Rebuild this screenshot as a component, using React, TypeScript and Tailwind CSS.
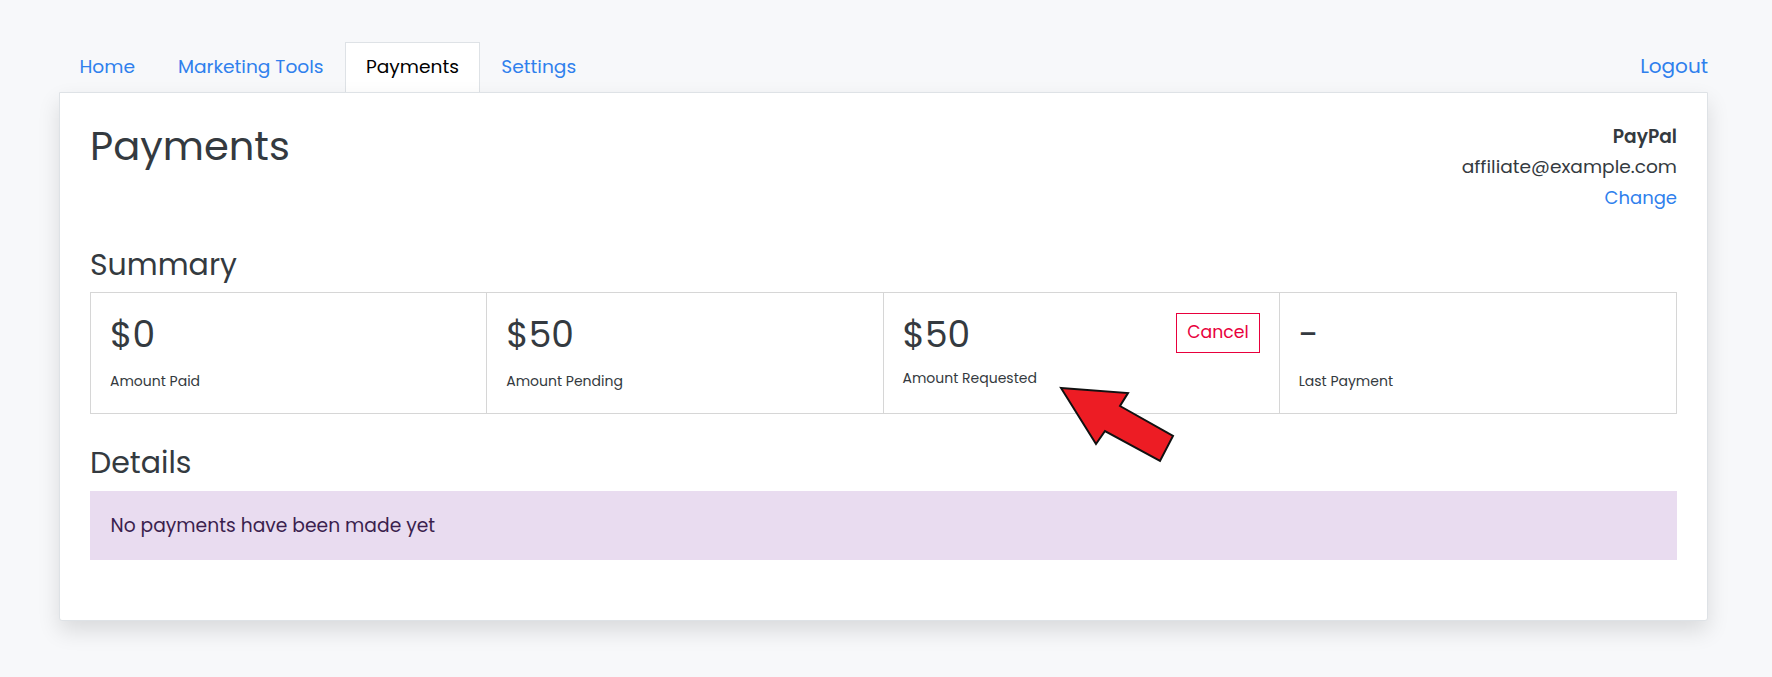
import React from "react";

const tabs = [
  { key: "home", label: "Home" },
  { key: "marketing", label: "Marketing Tools" },
  { key: "payments", label: "Payments" },
  { key: "settings", label: "Settings" },
];

const summary = [
  { value: "$0", label: "Amount Paid" },
  { value: "$50", label: "Amount Pending" },
  { value: "$50", label: "Amount Requested", cancel: true },
  { value: "-", label: "Last Payment" },
];

function Arrow() {
  return (
    <svg width="120" height="82" viewBox="0 0 120 82" className="absolute left-[998px] top-[292px]">
      <polygon
        points="3,3 70,8 62,21 115,51 102,76 47,46 38,59"
        fill="#ed1c24"
        stroke="#111"
        strokeWidth="2"
        strokeLinejoin="miter"
      />
    </svg>
  );
}

export default function App() {
  const active = "payments";

  return (
    <div className="min-h-[677px] bg-[#f7f8fa] font-['Poppins','Open_Sans',sans-serif] text-[#343a40]">
      <div className="ml-[59px] w-[1649px] pt-[42px]">
        <div className="flex items-end justify-between">
          <div className="-ml-[1px] flex">
            {tabs.map((tab) => {
              const isActive = tab.key === active;
              return (
                <div
                  key={tab.key}
                  className={
                    isActive
                      ? "relative -mb-px h-[50px] px-[20px] pt-[10px] text-[18.6px] text-black bg-white border border-b-0 border-[#dee2e6]"
                      : "h-[50px] px-[21.5px] pt-[11px] text-[18.6px] text-[#2f80ed]"
                  }
                >
                  {tab.label}
                </div>
              );
            })}
          </div>
          <div className="pb-[11px] text-[20px] text-[#2f80ed]">Logout</div>
        </div>

        <div className="relative rounded-b-[3px] border border-[#dee2e6] bg-white px-[30px] pt-[29px] pb-[60px] shadow-[0_10px_22px_rgba(0,0,0,0.12)]">
          <div className="flex justify-between">
            <h1 className="text-[40px] leading-[48px] font-normal">Payments</h1>
            <div className="text-right text-[18.6px] leading-[30px]">
              <div className="font-semibold">PayPal</div>
              <div>affiliate@example.com</div>
              <div className="text-[18px] text-[#2f80ed] leading-[32px]">Change</div>
            </div>
          </div>

          <h2 className="mt-[33px] text-[30px] leading-[36px]">Summary</h2>
          <div className="mt-[9px] grid grid-cols-4 border border-[#d6d6d6]">
            {summary.map((item, i) => (
              <div
                key={i}
                className={`px-[19px] pt-[20px] pb-[21px] ${i < 3 ? "border-r border-[#d6d6d6]" : ""}`}
              >
                <div className="flex items-start justify-between">
                  <div className="text-[36px] leading-[44px]">{item.value}</div>
                  {item.cancel && (
                    <button className="h-[40px] border border-[#e8003d] px-[10px] text-[17.3px] text-[#e8003d]">
                      Cancel
                    </button>
                  )}
                </div>
                <div className={`${item.cancel ? "mt-[11px]" : "mt-[14px]"} text-[14px] leading-[21px]`}>{item.label}</div>
              </div>
            ))}
          </div>

          <h2 className="mt-[31px] text-[30px] leading-[36px]">Details</h2>
          <div className="mt-[10px] bg-[#e9dcf0] px-[20.5px] py-[22.5px] text-[18.7px] leading-[24px] text-[#3b1f4e]">
            No payments have been made yet
          </div>

          <Arrow />
        </div>
      </div>
    </div>
  );
}
